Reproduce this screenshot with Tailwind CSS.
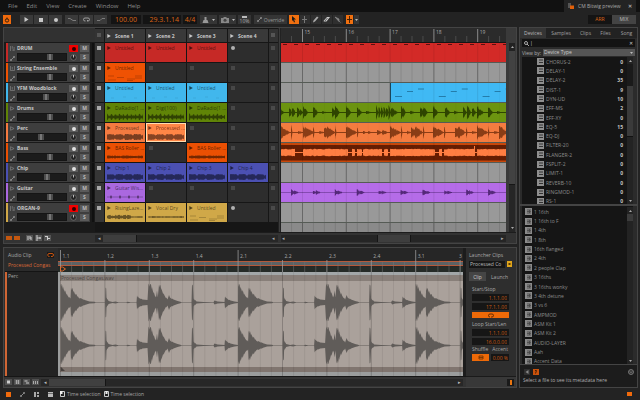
<!DOCTYPE html>
<html lang="en">
<head>
  <meta charset="UTF-8" />
  <meta name="viewport" content="width=device-width, initial-scale=1.0" />
  <title>CM Bitwig preview</title>
  <script src="https://cdn.jsdelivr.net/npm/@tailwindcss/browser@4"></script>
</head>
<body class="h-screen flex flex-col overflow-hidden bg-[#232323] text-[#a0a0a0] font-['Open_Sans','Noto_Sans',sans-serif] text-[5px] leading-[8px]">

  <header class="h-3 shrink-0 flex items-center bg-[#111111] text-[6px] text-[#8c8c8c]">
    <nav class="flex gap-[9px] pl-2">
      <a href="#">File</a>
      <a href="#">Edit</a>
      <a href="#">View</a>
      <a href="#">Create</a>
      <a href="#">Window</a>
      <a href="#">Help</a>
    </nav>
    <div class="ml-auto mr-1 h-3 w-[72px] px-1 flex items-center gap-1 bg-[#232323] text-[5px] text-[#a8a8a8]">
      <svg class="w-[6px] h-[6px]" viewBox="0 0 6 6"><path d="M0 0h3v5H0z" fill="#555"/><path d="M2 2.5h4V6H2z" fill="#e0600a"/></svg>
      <span class="whitespace-nowrap">CM Bitwig preview</span>
      <button class="ml-auto font-bold" aria-label="Close project">✕</button>
    </div>
  </header>

  <div class="h-[15px] shrink-0 flex items-center pl-[3px] pr-1">
    <button aria-label="Audio engine" class="w-2 h-[9px] bg-[#f06a0c] flex items-center justify-center">
      <svg class="w-[6px] h-[6px]" viewBox="0 0 6 6" fill="none" stroke="#40210a"><circle cx="3" cy="3.4" r="1.7"/><path d="M3 .5v2"/></svg>
    </button>
    <div class="ml-[9px] flex gap-px h-[9px]">
      <button aria-label="Play" class="w-[13px] bg-[#3a3a3a] flex items-center justify-center"><svg class="w-[5px] h-[5px]" viewBox="0 0 5 5"><path d="M.5 0L4.5 2.5L.5 5z" fill="#c8c8c8"/></svg></button>
      <button aria-label="Stop" class="w-[14px] bg-[#3a3a3a] flex items-center justify-center"><svg class="w-[4px] h-[4px]" viewBox="0 0 4 4"><path d="M0 0h4v4H0z" fill="#c8c8c8"/></svg></button>
      <button aria-label="Record" class="w-[13px] bg-[#3a3a3a] flex items-center justify-center"><svg class="w-[4px] h-[4px]" viewBox="0 0 4 4"><circle cx="2" cy="2" r="2" fill="#c8c8c8"/></svg></button>
    </div>
    <div class="ml-[3px] flex gap-px h-[9px]">
      <button aria-label="Punch in" class="w-[13px] bg-[#3a3a3a] flex items-center justify-center"><svg class="w-[8px] h-[5px]" viewBox="0 0 8 5" fill="none" stroke="#7c7c7c"><path d="M0 1.5h2l3 2h3"/></svg></button>
      <button aria-label="Loop" class="w-[14px] bg-[#3a3a3a] flex items-center justify-center"><svg class="w-[7px] h-[5px]" viewBox="0 0 7 5" fill="none" stroke="#a8a8a8" stroke-width=".9"><path d="M2.5 4H2A1.5 1.5 0 0 1 2 1h3a1.5 1.5 0 0 1 0 3H4l1-1"/></svg></button>
      <button aria-label="Punch out" class="w-[13px] bg-[#3a3a3a] flex items-center justify-center"><svg class="w-[8px] h-[5px]" viewBox="0 0 8 5" fill="none" stroke="#7c7c7c"><path d="M0 3.5h3l2-2h3"/></svg></button>
    </div>
    <div class="ml-1 flex gap-[2px] h-[9px] text-[7px] leading-[9px] text-[#dc6414]">
      <span class="w-[30px] bg-[#141414] text-center">100.00</span>
      <span class="w-[38px] bg-[#141414] text-right pr-[2px]">29.3.1.14</span>
      <span class="w-[14px] bg-[#141414] text-center">4/4</span>
    </div>
    <div class="ml-[3px] flex gap-[2px] h-[9px]">
      <button aria-label="Metronome" class="w-[17px] bg-[#353535] flex items-center justify-around"><svg class="w-[7px] h-[6px]" viewBox="0 0 7 6" fill="#999"><path d="M2.5 0h2v3h1l1 3H.5l1-3h1z"/></svg><svg class="w-[3px] h-[2px]" viewBox="0 0 3 2"><path d="M0 0h3L1.5 2z" fill="#bbb"/></svg></button>
      <button aria-label="Automation" class="w-[17px] bg-[#353535] flex items-center justify-around"><svg class="w-[8px] h-[6px]" viewBox="0 0 8 6"><path d="M0 1h2l1-1h2l1 1h2v5H0z" fill="#888"/><circle cx="4" cy="3.3" r="1.5" fill="#444"/></svg><svg class="w-[3px] h-[2px]" viewBox="0 0 3 2"><path d="M0 0h3L1.5 2z" fill="#bbb"/></svg></button>
      <button class="w-[13px] bg-[#353535] text-[#aaa] flex flex-col items-center justify-between leading-[5px]"><span class="mt-px w-[5px] h-[2px] bg-[#bbb]"></span>10%</button>
    </div>
    <button class="ml-[3px] w-[33px] h-[9px] bg-[#353535] text-[#999] flex items-center justify-center gap-[2px]">
      <svg class="w-[5px] h-[5px]" viewBox="0 0 5 5"><path d="M.7 4.3L4.3 .7" stroke="#888"/><circle cx="1" cy="4" r="1" fill="#888"/><circle cx="4" cy="1" r="1" fill="#888"/></svg>Override
    </button>
    <div class="ml-[2px] flex gap-px h-[9px]" id="tools"></div>
    <div class="ml-auto flex h-[9px] text-[5px] leading-[9px]">
      <button class="w-6 bg-[#141414] text-[#dc6414]">ARR</button>
      <button class="w-6 bg-[#444444] text-[#bbb]">MIX</button>
    </div>
  </div>

  <div class="flex-1 min-h-0 flex gap-[2px] pl-[3px] pr-[2px]">
    <main class="flex-1 min-w-0 flex flex-col gap-[3px]">

      <section class="shrink-0 border border-[#444444] bg-[#303030]">
        <div class="flex">
          <div class="w-[91px] shrink-0 bg-[#1a1a1a]">
            <div class="h-[15px] bg-[#313131] border-b border-[#191919]"></div>
            <div id="tracks"></div>
          </div>
          <div class="w-[183px] shrink-0 bg-[#161616]">
            <div id="scenes" class="h-[15px] flex gap-px pb-px pt-px font-bold text-[#c8c8c8]"></div>
            <div id="slots"></div>
            <div class="h-[9px]"></div>
          </div>
          <div class="w-[3px] shrink-0 bg-[#3c3c3c] border-x border-[#222]"></div>
          <div class="flex-1 min-w-0">
            <svg id="ruler" class="block w-full h-[15px] bg-[#2b2b2b]" viewBox="0 0 225 15" preserveAspectRatio="none"></svg>
            <svg id="lanes" class="block w-full h-[189px] bg-[#999999]" viewBox="0 0 225 189" preserveAspectRatio="none"></svg>
          </div>
          <div class="w-[10px] shrink-0 bg-[#3a3a3a] pl-[3px] pt-[15px] flex flex-col">
            <div class="w-[6px] h-2 bg-[#222] text-[#999] flex items-center justify-center"><svg class="w-[3px] h-[2px]" viewBox="0 0 3 2"><path d="M0 2h3L1.5 0z" fill="#aaa"/></svg></div>
            <div class="w-[6px] flex-1 bg-[#424242]"></div>
            <div class="w-[6px] h-12 bg-[#262626] border-t border-[#161616] flex items-end justify-center pb-[3px]"><svg class="w-[3px] h-[2px]" viewBox="0 0 3 2"><path d="M0 0h3L1.5 2z" fill="#aaa"/></svg></div>
          </div>
        </div>
        <div class="h-[11px] flex items-center bg-[#333333] border-t border-[#1c1c1c]">
          <div class="w-[91px] pl-[2px] flex items-center">
            <button aria-label="Clip launcher" class="w-[6px] h-1 bg-[#c4570f]"></button>
            <button aria-label="Arranger" class="ml-[2px] w-[6px] h-1 bg-[#c4570f]"></button>
            <button aria-label="Track I/O" class="ml-[6px] w-[7px] h-[6px] bg-[#555]"><svg class="w-full h-full" viewBox="0 0 7 6" stroke="#ccc"><path d="M2 1v4M4 1v3M5 2v3"/></svg></button>
            <button aria-label="Crossfade" class="ml-[2px] w-[7px] h-[6px] bg-[#555]"><svg class="w-full h-full" viewBox="0 0 7 6" stroke="#ccc"><path d="M2 0v6M2 3h4M5 2v2"/></svg></button>
            <button aria-label="Row height" class="ml-[2px] w-[7px] h-[6px] bg-[#555]"><svg class="w-full h-full" viewBox="0 0 7 6" stroke="#ccc"><path d="M1 1.5h3M3 3.5h3M3.5 1v4"/></svg></button>
          </div>
          <div class="w-[183px] h-[7px] flex items-center bg-[#272727] text-[#aaa]">
            <span class="w-[8px] text-center">◂</span><span class="w-[34px] h-full bg-[#3e3e3e] border-r border-[#151515]"></span><span class="ml-auto w-[6px]">◂</span>
          </div>
          <div class="ml-[3px] flex-1 h-[7px] flex items-center bg-[#252525] text-[#aaa]">
            <span class="w-[96px] pl-px">◂</span><span class="w-[34px] h-full bg-[#3e3e3e] border-x border-[#151515]"></span><span class="ml-auto w-[5px]">▸</span>
          </div>
          <div class="w-[10px]"></div>
        </div>
      </section>

      <section class="flex-1 min-h-0 border border-[#444444] bg-[#2e2e2e] flex">
        <div class="flex-1 min-w-0 flex flex-col">
          <div class="flex-1 min-h-0 flex">
            <div class="w-[54px] shrink-0 pl-px flex flex-col">
              <div class="h-6 pt-[3px] pl-[3px] pr-1 bg-[#2b2b2b] border-b border-[#141414]">
                <div class="flex justify-between items-center text-[#aaa]">Audio Clip
                  <span class="w-[7px] h-[6px] bg-[#1a1a1a]"><svg class="w-full h-full" viewBox="0 0 7 6" fill="none" stroke="#d85a10" stroke-width=".9"><path d="M2.5 4.5A1.5 1.5 0 0 1 2 1.5h3a1.5 1.5 0 0 1 0 3H4"/></svg></span>
                </div>
                <div class="mt-[2px] whitespace-nowrap text-[#dc6a38]">Processed Congas</div>
              </div>
              <div class="flex-1 bg-[#232323] border-l-2 border-[#cf6534] pl-px text-[#aaa]">Perc</div>
            </div>
            <div class="flex-1 min-w-0 flex flex-col">
              <svg id="clipRuler" class="block w-full h-6 shrink-0 bg-[#262626]" viewBox="0 0 405 24" preserveAspectRatio="none"></svg>
              <svg id="clipWave" class="block w-full flex-1 min-h-0 bg-[#aaa19b]" viewBox="0 0 405 104" preserveAspectRatio="none"></svg>
            </div>
            <div class="w-[3px] shrink-0 bg-[#1c1c1c]"></div>
          </div>
          <div class="h-[11px] shrink-0 flex items-center pl-px bg-[#333333] border-t border-[#161616] text-[#bbb]">
            <button aria-label="Waveform" class="w-[7px] h-[6px] bg-[#505050]"><svg class="w-full h-full" viewBox="0 0 7 6" fill="#ccc"><path d="M2 1.5h3v3H2z"/></svg></button>
            <button aria-label="Grid" class="ml-[2px] w-[7px] h-[6px] bg-[#505050]"><svg class="w-full h-full" viewBox="0 0 7 6" stroke="#bbb" stroke-width=".7"><path d="M2.5 1v4M4.5 1v4M1.5 2h4M1.5 4h4"/></svg></button>
            <button aria-label="Stretch" class="ml-[2px] w-[7px] h-[6px] bg-[#505050]"><svg class="w-full h-full" viewBox="0 0 7 6" stroke="#ccc"><path d="M1.5 2h3M3 4h3"/></svg></button>
            <button aria-label="Keys" class="ml-[2px] w-[7px] h-[6px] bg-[#505050]"><svg class="w-full h-full" viewBox="0 0 7 6" stroke="#aaa"><path d="M1.5 2v3M3.5 2v3M5.5 2v3"/></svg></button>
            <div class="ml-[2px] mr-[3px] flex-1 h-[7px] flex items-center bg-[#272727]">
              <span class="w-[8px] text-center">◂</span><span class="w-[57px] h-full bg-[#404040] border-r border-[#151515]"></span><span class="ml-auto w-[5px]">▸</span>
            </div>
          </div>
        </div>

        <aside class="w-[50px] shrink-0 flex flex-col">
          <div class="flex-1 px-[3px] pt-[3px] flex flex-col border-b border-[#1a1a1a]">
            <label for="clipName" class="whitespace-nowrap text-[#aaa]">Launcher Clips</label>
            <div class="mt-[2px] flex gap-[2px]">
              <input id="clipName" value="Processed Co" class="w-[36px] h-[7px] px-px bg-[#161616] text-[#bbb] leading-[7px]" />
              <button aria-label="Clip colour" class="w-[5px] h-[6px] bg-[#e0a51c]"><svg class="w-full h-full" viewBox="0 0 5 6"><path d="M1.500 2h2v2h-2z" fill="#5c3d00"/></svg></button>
            </div>
            <div class="mt-1 flex gap-[5px]">
              <button class="w-[17px] h-[9px] bg-[#454545] text-[#ccc]">Clip</button>
              <button class="h-[9px] text-[#aaa]">Launch</button>
            </div>
            <div class="pl-[3px] mt-1 flex flex-col text-[#aaa]">
              <label for="clipStart">Start/Stop</label>
              <input id="clipStart" value="1.1.1.00" class="mt-px w-[37px] h-[7px] pr-[2px] bg-[#161616] text-right text-[#cc5a12]" />
              <input aria-label="Stop" value="17.1.1.00" class="mt-[2px] w-[37px] h-[7px] pr-[2px] bg-[#161616] text-right text-[#cc5a12]" />
              <button aria-label="Loop clip" class="mt-[2px] w-[37px] h-[6px] bg-[#ee6a08] flex items-center justify-center"><svg class="w-[6px] h-[5px]" viewBox="0 0 6 5" fill="none" stroke="#4a2000" stroke-width=".8"><path d="M2 4A1.5 1.5 0 0 1 2 1h2a1.5 1.5 0 0 1 0 3H3"/></svg></button>
              <label for="loopStart" class="mt-[2px] whitespace-nowrap">Loop Start/Len</label>
              <input id="loopStart" value="1.1.1.00" class="mt-px w-[37px] h-[7px] pr-[2px] bg-[#161616] text-right text-[#cc5a12]" />
              <input aria-label="Loop length" value="16.0.0.00" class="mt-[2px] w-[37px] h-[7px] pr-[2px] bg-[#161616] text-right text-[#cc5a12]" />
              <div class="flex gap-1"><label for="shuffle">Shuffle</label><label for="accent">Accent</label></div>
              <div class="mt-px flex gap-[2px]">
                <button id="shuffle" class="w-[17px] h-[7px] bg-[#ee6a08] flex items-center justify-center"><svg class="w-[6px] h-[5px]" viewBox="0 0 6 5" fill="none" stroke="#6a3000" stroke-width=".8"><path d="M1 1h4v3H1zM1 2.5h4"/></svg></button>
                <input id="accent" value="0.00 %" class="w-[18px] h-[7px] pr-px bg-[#161616] text-right text-[#cc5a12]" />
              </div>
            </div>
          </div>
          <div class="h-[10px] bg-[#383838] flex items-center justify-end pr-[2px]">
            <button aria-label="Inspector" class="w-[7px] h-[7px] bg-[#1a1a1a] flex items-center justify-center"><span class="w-[2px] h-[5px] bg-[#e87510]"></span></button>
          </div>
        </aside>
      </section>
    </main>

    <aside class="w-[119px] shrink-0 border border-[#444444] bg-[#2b2b2b] flex flex-col">
      <nav class="h-[10px] flex items-center bg-[#222]">
        <button class="w-[26px] h-full bg-[#353535] text-[#bbb]">Devices</button>
        <button class="w-[30px]">Samples</button>
        <button class="w-[19px]">Clips</button>
        <button class="w-[21px]">Files</button>
        <button class="w-[21px]">Song</button>
      </nav>
      <div class="mt-px mx-[2px] h-[8px] shrink-0 flex items-center bg-[#131313] px-[2px] gap-px">
        <svg class="w-[5px] h-[5px]" viewBox="0 0 5 5" fill="none" stroke="#ccc" stroke-width=".8"><circle cx="2" cy="2" r="1.5"/><path d="M3 3l2 2"/></svg>
        <input aria-label="Search" value="|" class="flex-1 min-w-0 h-[7px] text-[#ccc]" />
        <button aria-label="Clear search" class="text-[#ccc]">✕</button>
      </div>
      <div class="mt-[2px] mx-[2px] h-[7px] flex items-center gap-[2px]">
        <label for="viewBy" class="w-[19px] whitespace-nowrap text-[#b0b0b0]">View by:</label>
        <div class="flex-1 h-[7px] flex items-center bg-[#555] pr-[2px]">
          <select id="viewBy" class="flex-1 h-[7px] leading-[7px] pl-px appearance-none text-[#ccc]"><option>Device Type</option></select>
          <svg class="w-[3px] h-[2px]" viewBox="0 0 3 2"><path d="M0 0h3L1.5 2z" fill="#bbb"/></svg>
        </div>
      </div>
      <div class="mt-px ml-[2px] mr-1 h-[147px] shrink-0 flex overflow-hidden bg-[#151515]">
        <div id="devices" class="flex-1 h-[149px] flex flex-col"></div>
        <div class="w-[6px] flex flex-col bg-[#232323]">
          <span class="h-[7px] flex items-center justify-center"><svg class="w-[3px] h-[2px]" viewBox="0 0 3 2"><path d="M0 2h3L1.5 0z" fill="#aaa"/></svg></span>
          <span class="h-[22px] bg-[#1a1a1a]"></span>
          <span class="h-[51px] bg-[#3a3a3a] border-b border-[#111]"></span>
          <span class="mt-auto h-[6px] flex items-center justify-center"><svg class="w-[3px] h-[2px]" viewBox="0 0 3 2"><path d="M0 0h3L1.5 2z" fill="#aaa"/></svg></span>
        </div>
      </div>
      <div class="h-[2px] shrink-0 bg-[#444]"></div>
      <div class="ml-[2px] mr-1 pt-px flex-1 min-h-0 flex overflow-hidden bg-[#151515]">
        <div id="presets" class="flex-1 h-[159px] flex flex-col"></div>
        <div class="w-[6px] flex flex-col bg-[#232323]">
          <span class="h-[7px] flex items-center justify-center"><svg class="w-[3px] h-[2px]" viewBox="0 0 3 2"><path d="M0 2h3L1.5 0z" fill="#aaa"/></svg></span>
          <span class="h-[7px] bg-[#3c3c3c]"></span>
          <span class="mt-auto h-[6px] flex items-center justify-center"><svg class="w-[3px] h-[2px]" viewBox="0 0 3 2"><path d="M0 0h3L1.5 2z" fill="#aaa"/></svg></span>
        </div>
      </div>
      <div class="h-[23px] shrink-0 border-t border-[#444] px-[3px] pt-1 bg-[#1c1c1c]">
        <div class="flex items-center gap-[3px] pl-px">
          <button aria-label="Preview" class="w-[6px] h-[6px] bg-[#303030]"><svg class="w-full h-full" viewBox="0 0 6 6"><path d="M4.5 1v4L1.5 3z" fill="#888"/></svg></button>
          <button aria-label="Auto preview" class="w-[6px] h-[6px] bg-[#c9520c]"><svg class="w-full h-full" viewBox="0 0 6 6"><path d="M2 1.5h1.500L2.500 4.500" stroke="#4d2003" fill="none"/></svg></button>
          <svg class="ml-auto w-[6px] h-[6px]" viewBox="0 0 6 6"><circle cx="3" cy="3" r="2.5" fill="#333" stroke="#888" stroke-width=".8"/><path d="M2 2.5l1 1.2l1-1.2" stroke="#aaa" stroke-width=".6" fill="none"/></svg>
        </div>
        <p class="mt-px whitespace-nowrap text-[#b0b0b0]">Select a file to see its metadata here</p>
      </div>
    </aside>
  </div>

  <footer class="h-3 shrink-0 flex items-center pl-[6px] pr-2 text-[#a8a8a8]">
    <button aria-label="Detail editor" class="w-[5px] h-[5px] bg-[#f06a0c]"></button>
    <button aria-label="Automation editor" class="ml-[9px] w-[5px] h-[5px]"><svg class="w-full h-full" viewBox="0 0 5 5"><path d="M.7 4.3L4.3 .7" stroke="#888"/><circle cx="1" cy="4" r="1" fill="#888"/><circle cx="4" cy="1" r="1" fill="#888"/></svg></button>
    <button aria-label="Device panel" class="ml-[9px] w-[5px] h-[5px]"><svg class="w-full h-full" viewBox="0 0 5 5" fill="#aaa"><path d="M0 0h2v5H0zM3 0h2v2H3zM3 3h2v2H3z"/></svg></button>
    <button aria-label="Mixer panel" class="ml-[9px] w-[5px] h-[5px]"><svg class="w-full h-full" viewBox="0 0 5 5" fill="#bbb"><path d="M0 0h5v1H0zM0 1.5h5V5H0z"/></svg></button>
    <span class="ml-[7px] flex items-center gap-[2px]"><svg class="w-[5px] h-[6px]" viewBox="0 0 5 6"><path d="M.5 .5h4v5h-4z" fill="none" stroke="#ccc"/><path d="M0 0h2.5v3H0z" fill="#eee"/></svg>Time selection</span>
    <span class="ml-[3px] flex items-center gap-[2px]"><svg class="w-[5px] h-[6px]" viewBox="0 0 5 6"><path d="M.5 .5h4v5h-4z" fill="none" stroke="#ccc"/><path d="M1.5 0h2v3h-2z" fill="#eee"/></svg>Time selection</span>
    <button aria-label="Browser panel" class="ml-auto w-[5px] h-1 bg-[#f06a0c]"></button>
  </footer>

  <script>
    const byId = id => document.getElementById(id);

    // slots: clip name, "" = empty slot, "o" = armed slot
    const tracks = [
      { name: "DRUM", color: "#c62926", vol: 68, armed: true, icon: "keys", kind: "none", clips: ["Untitled", "Untitled", "Untitled", "o"] },
      { name: "String Ensemble", color: "#ef5203", vol: 68, icon: "notes", kind: "notes", clips: ["Untitled", "", "", ""] },
      { name: "YFM Woodblock", color: "#41b7ec", vol: 60, icon: "notes", kind: "dots", clips: ["Untitled", "Untitled", "Untitled", ""] },
      { name: "Drums", color: "#608407", vol: 68, icon: "audio", kind: "beats", clips: ["DaRadio(1 ...", "Digi(100)", "DaRadio(1 ...", ""] },
      { name: "Perc", color: "#f47a40", vol: 47, icon: "audio", kind: "dense", selected: 1, clips: ["Processed ...", "Processed ...", "", ""] },
      { name: "Bass", color: "#eb5003", vol: 68, icon: "audio", kind: "line", clips: ["BAS Roller ...", "", "BAS Roller ...", ""] },
      { name: "Chip", color: "#4b50b2", vol: 62, icon: "audio", kind: "dense", clips: ["Chip 1", "Chip 2", "Chip 3", "Chip 4"] },
      { name: "Guitar", color: "#aa68df", vol: 68, icon: "audio", kind: "sparse", clips: ["Guitar Wis...", "", "", ""] },
      { name: "ORGAN-9", color: "#d0a848", vol: 68, armed: true, icon: "keys", kind: "mixed", clips: ["RisingLaze...", "Vocal Dry", "Untitled", "o"] }
    ];

    const icons = {
      keys: '<path d="M.5 0v5.5M2.5 0v3M4.500 1v4.500M2.500 4.500h2"/>',
      notes: '<path d="M.5 0v5h4.500V0M2.500 1v3"/>',
      audio: '<path d="M.5 .5v4.500M1 1l3.500 1.800L1 4.500"/>'
    };

    let seed = 7;
    function rnd() {
      seed = (seed * 16807) % 2147483647;
      return seed / 2147483647;
    }

    // closed outline from [x, amplitude] pairs mirrored round y
    function mirror(pts, y) {
      const f = n => n.toFixed(1);
      const top = pts.map(p => f(p[0]) + " " + f(y - p[1]));
      const bottom = pts.slice().reverse().map(p => f(p[0]) + " " + f(y + p[1]));
      return "M" + top.join("L") + "L" + bottom.join("L") + "Z";
    }

    function miniWave(kind, col) {
      if (kind === "none") return "";
      if (kind === "dots") return '<path d="M4 5h3M16 4h3M27 5h3" stroke="#000" stroke-opacity=".12" stroke-width=".6"/>';
      if (kind === "notes" || (kind === "mixed" && col === 2)) return '<path d="M1 3h6M10 4.5h7M20 6h8M28 3h7M1 7h8M20 7.5h6M28 5h7" stroke="#000" stroke-opacity=".25" stroke-width=".8"/>';
      const pts = [];
      for (let x = 0; x <= 36; x += 0.5) {
        let a = 0.4;
        if (kind === "beats") a = x % 4 < 1.5 ? 2 + rnd() * 1.5 : 0.8 + rnd();
        if (kind === "dense") a = 2 + rnd() * 0.6 + (x % 9 < 7 ? 0.4 : -0.6);
        if (kind === "line") a = 0.8 + rnd() * 0.8;
        if (kind === "sparse") a = x % 9 > 3 && x % 9 < 5 ? 1.5 : 0.2;
        if (kind === "mixed") a = col === 0 ? (x < 24 ? 0.8 + rnd() * 1.6 : 0.4 + rnd() * 0.5) : 0.5 + rnd() * 0.4;
        pts.push([x, a]);
      }
      return `<path d="${mirror(pts, 4)}" fill="#000" fill-opacity=".5"/>`;
    }

    byId("tracks").innerHTML = tracks.map(t => `
      <div class="h-5 flex pl-[2px] pb-px">
        <span class="w-[2px]" style="background:${t.color}"></span>
        <div class="w-[82px] bg-[#3e3e3e] flex pl-px">
          <div class="w-2 flex flex-col gap-[5px] pt-[3px] pl-px">
            <svg class="w-[5px] h-[5px]" viewBox="0 0 5.5 5.5" fill="none" stroke="#808080" stroke-width=".8">${icons[t.icon]}</svg>
            <svg class="w-[5px] h-[5px]" viewBox="0 0 5 5"><path d="M.7 4.3L4.3 .7" stroke="#888"/><circle cx="1" cy="4" r="1" fill="#888"/><circle cx="4" cy="1" r="1" fill="#888"/></svg>
          </div>
          <div class="w-[50px] flex flex-col pt-px">
            <span class="h-[9px] whitespace-nowrap font-bold text-[#c8c8c8]">${t.name}</span>
            <input type="range" aria-label="${t.name} volume" value="${t.vol}" class="block w-full h-2 appearance-none bg-[#1b1b1b] border border-[#151515] [&::-webkit-slider-thumb]:appearance-none [&::-webkit-slider-thumb]:w-[6px] [&::-webkit-slider-thumb]:h-[6px] [&::-webkit-slider-thumb]:bg-[#777] [&::-webkit-slider-thumb]:border-x-2 [&::-webkit-slider-thumb]:border-[#4c4c4c]" />
          </div>
          <div class="flex-1 grid grid-cols-2 gap-x-[2px] gap-y-[2px] pl-[2px] pr-px pt-[2px] pb-px text-center font-bold text-[#bbb]">
            <button aria-label="Record arm" class="flex items-center justify-center ${t.armed ? "bg-[#f00000]" : "bg-[#5a5a5a]"}"><span class="w-1 h-1 rounded-full ${t.armed ? "bg-[#300000]" : "bg-[#e0e0e0]"}"></span></button>
            <button class="bg-[#5a5a5a] leading-[7px]">M</button>
            <button aria-label="Pan" class="flex items-center justify-center"><svg class="w-[7px] h-[7px]" viewBox="0 0 7 7"><circle cx="3.5" cy="3.5" r="2.8" fill="#222" stroke="#777" stroke-width=".7"/><path d="M3.5 3.5V1" stroke="#ddd" stroke-width=".8"/></svg></button>
            <button class="bg-[#5a5a5a] leading-[7px]">S</button>
          </div>
        </div>
        <span class="ml-[2px] w-[2px] bg-[#101010]"></span>
        <span class="flex-1 bg-[#383838] ml-px"></span>
      </div>`).join("");

    const stopCell = '<div class="shrink-0 w-[9px] bg-[#303030] pt-[3px] pl-[2px]"><div class="w-1 h-1 bg-[#4a4a4a]"></div></div>';
    const stopCellOn = '<div class="shrink-0 w-[9px] bg-[#363636] pt-[3px] pl-[2px]"><div class="w-1 h-1 bg-[#a8a8a8]"></div></div>';
    const play = '<svg class="w-[4px] h-[4px] shrink-0" viewBox="0 0 4 4"><path d="M.3 0L3.8 2L.3 4z" fill="currentColor"/></svg>';

    byId("scenes").innerHTML = '<div class="shrink-0 w-[9px] bg-[#333] pt-1 pl-[2px]"><div class="w-1 h-1 bg-[#555]"></div></div>' +
      [1, 2, 3, 4].map(n => `<button class="w-[40px] bg-[#393939] flex items-center gap-1 pl-[2px] whitespace-nowrap">${play}Scene ${n}</button>`).join("") +
      '<div class="flex-1 bg-[#333] pt-1 pl-[2px]"><div class="w-1 h-1 bg-[#555]"></div></div>';

    byId("slots").innerHTML = tracks.map(t => `
      <div class="h-5 flex gap-px pb-px">
        ${stopCellOn}
        ${t.clips.map((c, i) => {
          if (c === "") return '<div class="w-[40px] bg-[#2d2d2d] pt-[3px] pl-[3px]"><div class="w-1 h-1 bg-[#474747]"></div></div>';
          if (c === "o") return '<div class="w-[40px] bg-[#2d2d2d] pt-[3px] pl-[3px]"><div class="w-1 h-1 rounded-full bg-[#b0b0b0]"></div></div>';
          return `<button class="w-[40px] overflow-hidden flex flex-col text-left text-black/60 ${t.selected === i ? "outline outline-[#ffc9a0] -outline-offset-1 brightness-110" : ""}" style="background:${t.color}">
            <span class="flex items-center gap-1 pl-[2px] h-[9px] whitespace-nowrap">${play}${c}</span>
            <svg class="ml-[2px] w-[36px] h-2 mt-px" viewBox="0 0 36 8">${miniWave(t.kind, i)}</svg>
          </button>`;
        }).join("")}
        ${stopCell}
      </div>`).join("");

    // arranger: one bar is 43.8 units wide, bar 15 starts at 21.5
    const bar = 43.8;
    let ruler = "", grid = "";
    for (let i = -2; i < 19; i++) {
      const x = 21.5 + i * bar / 4;
      const major = i % 4 === 0;
      ruler += `<path d="M${x} ${major ? 1 : 8}v14" stroke="${major ? "#8a8a8a" : "#4c4c4c"}" stroke-width="1"/>`;
      grid += `<path d="M${x} 0v189" stroke="#000" stroke-opacity="${major ? 0.25 : 0.08}" stroke-width="1"/>`;
      if (major) ruler += `<text x="${x + 2}" y="6" font-size="5" fill="#aaa">${15 + i / 4}</text>`;
    }
    byId("ruler").innerHTML = ruler + '<path d="M0 14.5h225" stroke="#151515"/>';

    function hits(list, y) {
      return list.map(([x, a, len]) => {
        const pts = [];
        for (let d = 0; d <= len; d += 0.5) pts.push([x + d, a * Math.pow(1 - d / len, 0.8) * (0.55 + rnd() * 0.45)]);
        return mirror(pts, y);
      }).join("");
    }

    const drumHits = [[0, 4, 3], [8, 7, 3], [11, 7, 3.5], [16, 6, 4], [19, 4, 3], [22, 7, 5], [32, 7, 5], [41, 2, 5], [51, 7, 4], [54, 8, 4.5], [65, 8, 5], [76, 6, 5], [85, 2, 6], [110, 6, 7], [120, 8, 5], [129, 2, 6], [139, 7, 4], [142, 7, 5], [152, 8, 5], [164, 7, 5], [173, 2, 5], [182, 6, 4], [186, 8, 4], [191, 6, 4], [196, 8, 5], [199, 4, 4], [207, 7, 5], [216, 2, 5]];
    for (let x = 95; x < 108; x += 2.5) drumHits.push([x, 8, 2.5]);
    const percHits = [[0, 7, 9], [10, 8, 1.5], [17, 2, 6], [22, 8, 5], [24, 6, 9], [32, 8, 1.5], [38, 2, 6], [43, 7, 6], [46, 7, 8], [54, 8, 1.5], [65, 8, 5], [67, 6, 9], [76, 7, 1.5], [82, 2, 4], [87, 2, 4], [96, 3, 5], [101, 3, 6], [109, 8, 5], [111, 6, 9], [120, 8, 1.5], [126, 2, 4], [130, 7, 6], [134, 7, 8], [142, 8, 1.5], [152, 8, 5], [154, 6, 9], [163, 8, 1.5], [174, 8, 6], [177, 7, 8], [185, 8, 1.5], [191, 2, 5], [196, 8, 5], [198, 6, 9], [207, 8, 1.5], [213, 2, 5], [218, 8, 8]];
    const guitarHits = [];
    for (let i = 0; i < 10; i++) {
      const x = 10 + i * 21.9;
      guitarHits.push([x, i % 3 === 1 ? 2.5 : 4, 4], [x + 3, 2.5, 5]);
    }

    const bassBlocks = [[0, 14], [22, 67], [71, 74], [76, 81], [82, 101], [103, 107], [109, 154], [158, 161], [163, 194], [196, 225]];
    const bass = bassBlocks.map(([a, b]) => {
      const pts = [];
      for (let x = a; x <= b; x += 1) pts.push([x, 3 + rnd() * 0.8]);
      return mirror(pts, 9.5);
    }).join("");

    let redDots = "", cyanNotes = "";
    for (let x = 2; x < 225; x += 11) redDots += `M${x} 1.5h4`;
    for (let x = 109; x < 225; x += bar) cyanNotes += `M${x + 5} 13.5h7M${x + 17} 8.500h6M${x + 28} 6h6`;

    function lane(i, x, fill, inner) {
      return `<g transform="translate(0 ${i * 20})"><path d="M${x} 0H225V19H${x}z" fill="${fill}"/>${inner}</g>`;
    }

    let separators = "";
    for (let i = 1; i < 10; i++) separators += `<path d="M0 ${i * 20 - 0.5}h225" stroke="#555b55"/>`;

    byId("lanes").innerHTML =
      '<path d="M0 180h225v9H0z" fill="#8a8a8a"/>' + grid +
      lane(0, 0, "#d32a27", `<path d="${redDots}" stroke="#5a1010" stroke-width="1"/>`) +
      lane(2, 109, "#40b9f4", `<path d="${cyanNotes}" stroke="#1d6d98" stroke-width=".8"/><path d="M109.5 0v19" stroke="#1d4a60"/>`) +
      lane(3, 0, "#6c9410", `<path d="${hits(drumHits, 9.5)}M0 9h225v1H0z" fill="#2f4500"/>`) +
      lane(4, 0, "#f47c40", `<path d="${hits(percHits, 9.5)}M0 9h225v1H0z" fill="#8a3d16"/>`) +
      lane(5, 0, "#c8470a", `<path d="M0 2h225v15.5H0z" fill="#651d02"/><path d="${bass}M193 3h1v8h-1zM0 9h225v1H0z" fill="#ff7e42"/>`) +
      lane(7, 0, "#b56ce8", `<path d="${hits(guitarHits, 9.5)}M0 9.2h225v.6H0z" fill="#55297a"/>`) +
      `<g opacity=".35">${grid}</g>` + separators;

    // clip editor: one beat is 44.4 units wide
    const beat = 44.4;
    let cr = '<path d="M0 13h405v2H0z" fill="#b5593a"/><path d="M0 14h405v3H0z" fill="#5b6265"/><path d="M0 17h405v1H0z" fill="#b5593a"/><path d="M0 19h405v5H0z" fill="#252b27"/>';
    let cg = "";
    for (let i = 0; i < 37; i++) {
      const x = 2.5 + i * beat / 4;
      const b = i / 4;
      if (i % 4 === 0) {
        cr += `<path d="M${x} ${b % 4 === 0 ? 2 : 12}V24" stroke="#999" stroke-width=".8"/>`;
        cr += b < 9
          ? `<text x="${x + 2}" y="10" font-size="5" fill="#aaa">${Math.floor(b / 4) + 1}.${b % 4 + 1}</text>`
          : `<text x="${x - 1}" y="10" font-size="5" fill="#aaa">3</text>`;
      } else {
        cr += `<path d="M${x} 14V24" stroke="#777" stroke-width=".5"/>`;
      }
      cg += `<path d="M${x} 0V104" stroke="#000" stroke-opacity="${i % 4 === 0 ? 0.2 : 0.07}" stroke-width="1"/>`;
    }
    byId("clipRuler").innerHTML = cr + '<path d="M2.5 19h2l3 2-3 2h-2z" fill="none" stroke="#e06a2c"/>';

    // envelope of one bar of congas, in editor units
    const env = [[0, 19], [1.5, 18], [3, 14], [5, 11], [7, 7], [10, 4], [10.5, 15], [12, 14], [14, 9.5], [16, 8], [18, 5], [21, 4], [25, 2.3], [29, 1], [34, 0.8], [35, 0.3],
      [44.5, 0.3], [45, 15], [45.7, 14], [46, 5], [48, 1.5], [52, 0.4], [55, 0.9], [58, 0.3], [66, 0.3], [67, 0.8], [70, 0.3],
      [76, 0.3], [76.5, 7], [78, 5], [82, 3], [87, 2.5], [88, 19], [90.5, 18], [92, 13], [94, 8], [95.5, 5], [96.5, 12], [97.3, 5], [98.5, 18], [100, 17], [101.5, 12], [104, 7], [107, 3], [108.5, 7.5], [109.5, 5], [113, 3], [117, 1.5], [120, 0.8], [121, 0.3],
      [131, 0.3], [131.5, 18], [132.3, 17], [133, 4], [136, 1], [143, 0.4], [153, 0.3], [154, 2], [157, 1], [164, 0.4], [164.5, 6], [167, 3.5], [170, 2], [174, 1], [177.5, 0.5]];
    const wave = [];
    for (let r = 0; r < 3; r++) {
      const start = 2.5 + r * beat * 4;
      env.forEach(([x, a], i) => {
        wave.push([start + x, a]);
        const next = env[i + 1];
        if (next && a > 3 && next[1] < a && next[0] - x > 1.4) {
          const mid = (a + next[1]) / 2;
          wave.push([start + (x + next[0]) / 2, mid * 0.85], [start + (x + next[0]) / 2 + 0.3, mid]);
        }
      });
    }
    byId("clipWave").innerHTML =
      '<path d="M0 0h405v3H0z" fill="#a2a7a8"/><path d="M2 3h403v6H2z" fill="#887f79"/><path d="M2 95h403v5H2z" fill="#80756f"/><path d="M0 100h405v4H0zM0 0h2v104H0z" fill="#9b9d9d"/>' + cg +
      `<path d="${mirror(wave, 30.5)}${mirror(wave, 73.5)}" fill="#605c59"/><path d="M3 95l4 4H3z" fill="#47423f"/><text x="3" y="8" font-size="5" fill="#4a4541">Processed Congas.wav</text>`;

    const devices = [["CHORUS-2", 0], ["DELAY-1", 0], ["DELAY-2", 35], ["DIST-1", 9], ["DYN-UD", 10], ["EFF-MS", 2], ["EFF-XY", 0], ["EQ-5", 15], ["EQ-DJ", 0], ["FILTER-20", 0], ["FLANGER-2", 0], ["FSPLIT-2", 0], ["LIMIT-1", 0], ["REVERB-10", 0], ["RINGMOD-1", 0], ["RS-1", 0]];
    byId("devices").innerHTML = devices.map(([name, count]) => `
      <div class="flex-1 min-h-0 flex items-center pl-[15px] pr-1 text-[#8c8c8c]">
        <svg class="w-[7px] h-[7px] mr-[2px]" viewBox="0 0 7 7"><path d="M0 0h7v7H0z" fill="#8f8f8f"/><path d="M2 2h4M2 4.5h4" stroke="#333"/></svg>
        ${name}<span class="ml-auto font-bold text-[#c4c4c4]">${count}</span>
      </div>`).join("");

    const presets = ["1 16th", "1 16th to F", "1 4th", "1 8th", "16th flanged", "2 4th", "2 people Clap", "3 16ths", "3 16ths wonky", "3 4th detune", "3 vs 6", "AMPMOD", "ASM Kit 1", "ASM Kit 2", "AUDIO-LAYER", "Aah", "Accent Data"];
    byId("presets").innerHTML = presets.map(name => `
      <div class="flex-1 min-h-0 flex items-center pl-[3px] text-[#8c8c8c]">
        <svg class="w-[7px] h-[7px] mr-[2px]" viewBox="0 0 7 7"><path d="M0 0h7v7H0z" fill="#8a8a8a"/><path d="M2 2h4M2 3.5h4M2 5h4M4.5 2v3" stroke="#444" stroke-width=".8"/></svg>
        ${name}
      </div>`).join("");

    const tools = [
      ["Pointer", '<path d="M3 1l4 3.5H5l1 2.5-1 .4-1-2.5-1 1z" fill="#1a1a1a"/>'],
      ["Time selection", '<path d="M4.5 1v7M2 4.5h5" stroke="#777"/>'],
      ["Pen", '<path d="M2 7.5l.5-2L6 1.5l1.500 1L4 6.5z" fill="#aaa"/>'],
      ["Eraser", '<path d="M1.5 6L5 2h3L4.5 6.5H2z" fill="#ccc"/><path d="M3 6l2.5-3" stroke="#333" stroke-width=".7"/>'],
      ["Knife", '<path d="M2 2l4 4.5V4zM6 6l1.5 1.500" fill="#888" stroke="#888" stroke-width=".7"/>']
    ];
    byId("tools").innerHTML = tools.map(([name, d], i) => `
      <button aria-label="${name}" class="w-[10px] ${i === 0 ? "bg-[#f07010]" : "bg-[#2f2f2f]"}"><svg class="w-[9px] h-[9px]" viewBox="0 0 9 9">${d}</svg></button>`).join("") + `
      <button aria-label="Snap" class="ml-[2px] w-[7px] bg-[#f07010]"><svg class="w-[7px] h-[9px]" viewBox="0 0 7 9"><path d="M3.5 1v7M1 4.5h5" stroke="#3a1a00" stroke-width=".9"/></svg></button>
      <button aria-label="Snap options" class="w-[5px] bg-[#353535] flex items-center justify-center"><svg class="w-[3px] h-[2px]" viewBox="0 0 3 2"><path d="M0 0h3L1.5 2z" fill="#bbb"/></svg></button>`;
  </script>
</body>
</html>
